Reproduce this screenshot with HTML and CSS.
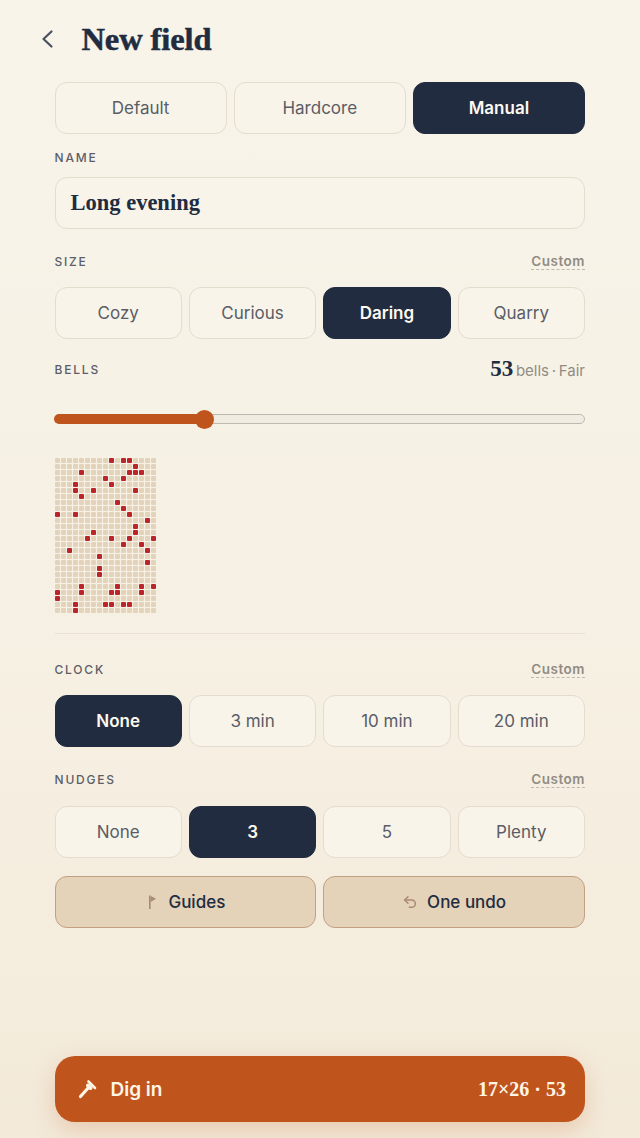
FILE: index.html
```html
<!DOCTYPE html>
<html lang="en">
<head>
    <meta charset="UTF-8">
    <meta name="viewport" content="width=device-width, initial-scale=1.0">
    <title>New field</title>
    <link rel="stylesheet" href="styles.css">
</head>
<body>
    <div class="page">
        <!-- Header -->
        <div class="header">
            <svg class="back-icon" width="24" height="24" viewBox="0 0 24 24" fill="none" stroke="#4b5060" stroke-width="2.2" stroke-linecap="round" stroke-linejoin="round">
                <path d="M15.5 4.5 7.5 12l8 7.5"/>
            </svg>
            <h1>New field</h1>
        </div>

        <div class="content">
            <div class="options three">
                <div class="option">Default</div>
                <div class="option">Hardcore</div>
                <div class="option selected">Manual</div>
            </div>

            <div class="label-row name-label"><span class="label">NAME</span></div>
            <div class="name-input">Long evening</div>

            <div class="label-row size-label">
                <span class="label">SIZE</span>
                <span class="custom">Custom</span>
            </div>
            <div class="options four">
                <div class="option">Cozy</div>
                <div class="option">Curious</div>
                <div class="option selected">Daring</div>
                <div class="option">Quarry</div>
            </div>

            <div class="label-row bells-label">
                <span class="label">BELLS</span>
                <span class="bells-value"><b>53</b> bells · Fair</span>
            </div>
            <div class="slider">
                <div class="slider-fill" style="width: 28.1%"></div>
                <div class="slider-thumb" style="left: 28.1%"></div>
            </div>

            <!-- Minefield preview, filled in by field.js -->
            <div class="field" id="field"></div>

            <div class="divider"></div>

            <div class="label-row clock-label">
                <span class="label">CLOCK</span>
                <span class="custom">Custom</span>
            </div>
            <div class="options four">
                <div class="option selected">None</div>
                <div class="option">3 min</div>
                <div class="option">10 min</div>
                <div class="option">20 min</div>
            </div>

            <div class="label-row nudges-label">
                <span class="label">NUDGES</span>
                <span class="custom">Custom</span>
            </div>
            <div class="options four">
                <div class="option">None</div>
                <div class="option selected">3</div>
                <div class="option">5</div>
                <div class="option">Plenty</div>
            </div>

            <div class="toggles">
                <div class="toggle">
                    <svg width="14" height="16" viewBox="-1 0 14 16" fill="#a98a70">
                        <path d="M3 1.5h1.6V15H3z"/>
                        <path d="M4.6 2 10 4.8 4.6 8z"/>
                    </svg>
                    Guides
                </div>
                <div class="toggle">
                    <svg width="16" height="16" viewBox="0 0 24 24" fill="none" stroke="#a98a70" stroke-width="2.2" stroke-linecap="round" stroke-linejoin="round">
                        <path d="M9 14 4 9l5-5"/>
                        <path d="M4 9h10.5a5.5 5.5 0 0 1 0 11H11"/>
                    </svg>
                    One undo
                </div>
            </div>
        </div>

        <!-- Start button -->
        <div class="start">
            <div class="start-left">
                <svg width="20" height="20" viewBox="0 0 20 20" fill="none" stroke="#fdf5e6" stroke-linecap="round">
                    <path d="M2.5 17.5 10.5 8.5" stroke-width="3.2"/>
                    <path d="M10.5 2.5 17 9" stroke-width="2.6"/>
                    <path d="M10 6.5 12.5 9" stroke-width="4"/>
                </svg>
                <span>Dig in</span>
            </div>
            <span class="start-info">17×26 · 53</span>
        </div>
    </div>

    <script src="field.js"></script>
</body>
</html>
```

FILE: styles.css
```css
body {
    font-family: Inter, "Noto Sans", sans-serif;
    margin: 0;
    padding: 0;
    color: #222c40;
    background: linear-gradient(180deg, #f8f4ea 0%, #f6f0e3 60%, #f3ead9 100%);
}

.page {
    display: flex;
    flex-direction: column;
    height: 1138px;
    box-sizing: border-box;
    padding: 0 55px 16px 54.5px;
    overflow: hidden;
}

/* Header */
.header {
    display: flex;
    align-items: center;
    height: 82px;
    margin-left: -19px;
    padding-bottom: 4px;
    box-sizing: border-box;
}

.back-icon {
    flex-shrink: 0;
}

.header h1 {
    margin: 0 0 0 22px;
    font-family: "Liberation Serif", serif;
    font-size: 32.5px;
    font-weight: 700;
    letter-spacing: -0.1px;
    -webkit-text-stroke: 0.5px #222c40;
    color: #222c40;
}

/* Option rows */
.options {
    display: grid;
    gap: 7px;
}

.options.three { grid-template-columns: repeat(3, 1fr); }
.options.four { grid-template-columns: repeat(4, 1fr); }

.option {
    display: flex;
    align-items: center;
    justify-content: center;
    height: 52px;
    box-sizing: border-box;
    border: 1.5px solid #e4dccc;
    border-radius: 12px;
    background: #f8f4ea;
    font-size: 17px;
    color: #5a5d66;
}

.option.selected {
    background: #222c40;
    border-color: #222c40;
    color: #fdf9f0;
    font-weight: 600;
}

/* Section labels */
.label-row {
    display: flex;
    justify-content: space-between;
    align-items: center;
    height: 20px;
}

.name-label { margin: 13px 0 10px; }
.size-label { margin: 22px 0 16px; }
.bells-label { margin: 20px 0 0; }
.clock-label { margin: 25px 0 16px; }
.nudges-label { margin: 22px 0 17px; }

.label {
    font-size: 12px;
    font-weight: 500;
    letter-spacing: 1.8px;
    color: #5c5d66;
}

.custom {
    padding-top: 2px;
    font-size: 13.5px;
    font-weight: 600;
    letter-spacing: 0.5px;
    color: #918c84;
    border-bottom: 1px dashed #bdb8ae;
    line-height: 15px;
}

.name-input {
    display: flex;
    align-items: center;
    height: 52px;
    box-sizing: border-box;
    padding: 0 15px;
    border: 1.5px solid #e4dccc;
    border-radius: 12px;
    background: #f8f4ea;
    font-family: "Liberation Serif", serif;
    font-size: 22.5px;
    font-weight: 700;
    color: #222c40;
}

/* Bells */
.bells-value {
    font-size: 15px;
    word-spacing: -1.5px;
    color: #918c84;
}

.bells-value b {
    font-family: "Liberation Serif", serif;
    font-size: 23px;
    color: #222c40;
}

.slider {
    position: relative;
    height: 10px;
    margin-top: 35px;
    box-sizing: border-box;
    border: 1.5px solid #bdb9b0;
    border-radius: 5px;
    background: #f1ece1;
}

.slider-fill {
    position: absolute;
    left: -1.5px;
    top: -1.5px;
    height: 10px;
    border-radius: 5px;
    background: #c0541d;
}

.slider-thumb {
    position: absolute;
    top: 50%;
    width: 19px;
    height: 19px;
    margin: -9.5px 0 0 -9.5px;
    border-radius: 50%;
    background: #c0541d;
}

/* Field preview */
.field {
    display: grid;
    grid-template-columns: repeat(17, 5px);
    grid-auto-rows: 5px;
    gap: 1px;
    margin-top: 33px;
    padding: 0.5px;
}

.cell {
    background: #e2d3ba;
    border-radius: 1px;
}

.cell.bell {
    background: #b9252b;
}

.divider {
    height: 1px;
    margin-top: 20px;
    background: #e8e1d2;
}

/* Guides and undo */
.toggles {
    display: grid;
    grid-template-columns: repeat(2, 1fr);
    gap: 7px;
    margin-top: 18px;
}

.toggle {
    display: flex;
    align-items: center;
    justify-content: center;
    gap: 9px;
    height: 52px;
    box-sizing: border-box;
    border: 1.5px solid #c49f83;
    border-radius: 12px;
    background: #e4d2b9;
    font-size: 17px;
    font-weight: 500;
    color: #222c40;
}

/* Start button */
.start {
    display: flex;
    align-items: center;
    justify-content: space-between;
    height: 66px;
    margin-top: auto;
    padding: 0 19px 0 23px;
    border-radius: 20px;
    background: #c0541d;
    color: #fdf5e6;
    box-shadow: 0 8px 24px rgba(192, 84, 29, 0.22);
}

.start-left {
    display: flex;
    align-items: center;
    gap: 13px;
    font-size: 19px;
    font-weight: 600;
}

.start-info {
    font-family: "Liberation Serif", serif;
    font-size: 20px;
    font-weight: 700;
}
```

FILE: field.js
```js
const COLS = 17;
const ROWS = 26;

// row -> columns that hold a bell
const bells = {
    0: [9, 11, 12], 1: [13], 2: [4, 12, 13, 14], 3: [8, 11], 4: [3, 9],
    5: [3, 6, 13], 6: [4], 7: [10], 8: [11], 9: [0, 3, 12], 10: [15],
    11: [13], 12: [6, 13], 13: [5, 9, 12, 16], 14: [11, 14], 15: [2, 15],
    16: [7], 17: [15], 18: [7], 19: [7], 21: [4, 10, 14, 16],
    22: [0, 4, 9, 10, 14], 23: [0], 24: [3, 8, 9, 11, 12], 25: [3]
};

const field = document.getElementById("field");

for (let row = 0; row < ROWS; row++) {
    for (let col = 0; col < COLS; col++) {
        const cell = document.createElement("div");
        cell.className = "cell";
        if (bells[row] && bells[row].includes(col)) {
            cell.classList.add("bell");
        }
        field.appendChild(cell);
    }
}
```
